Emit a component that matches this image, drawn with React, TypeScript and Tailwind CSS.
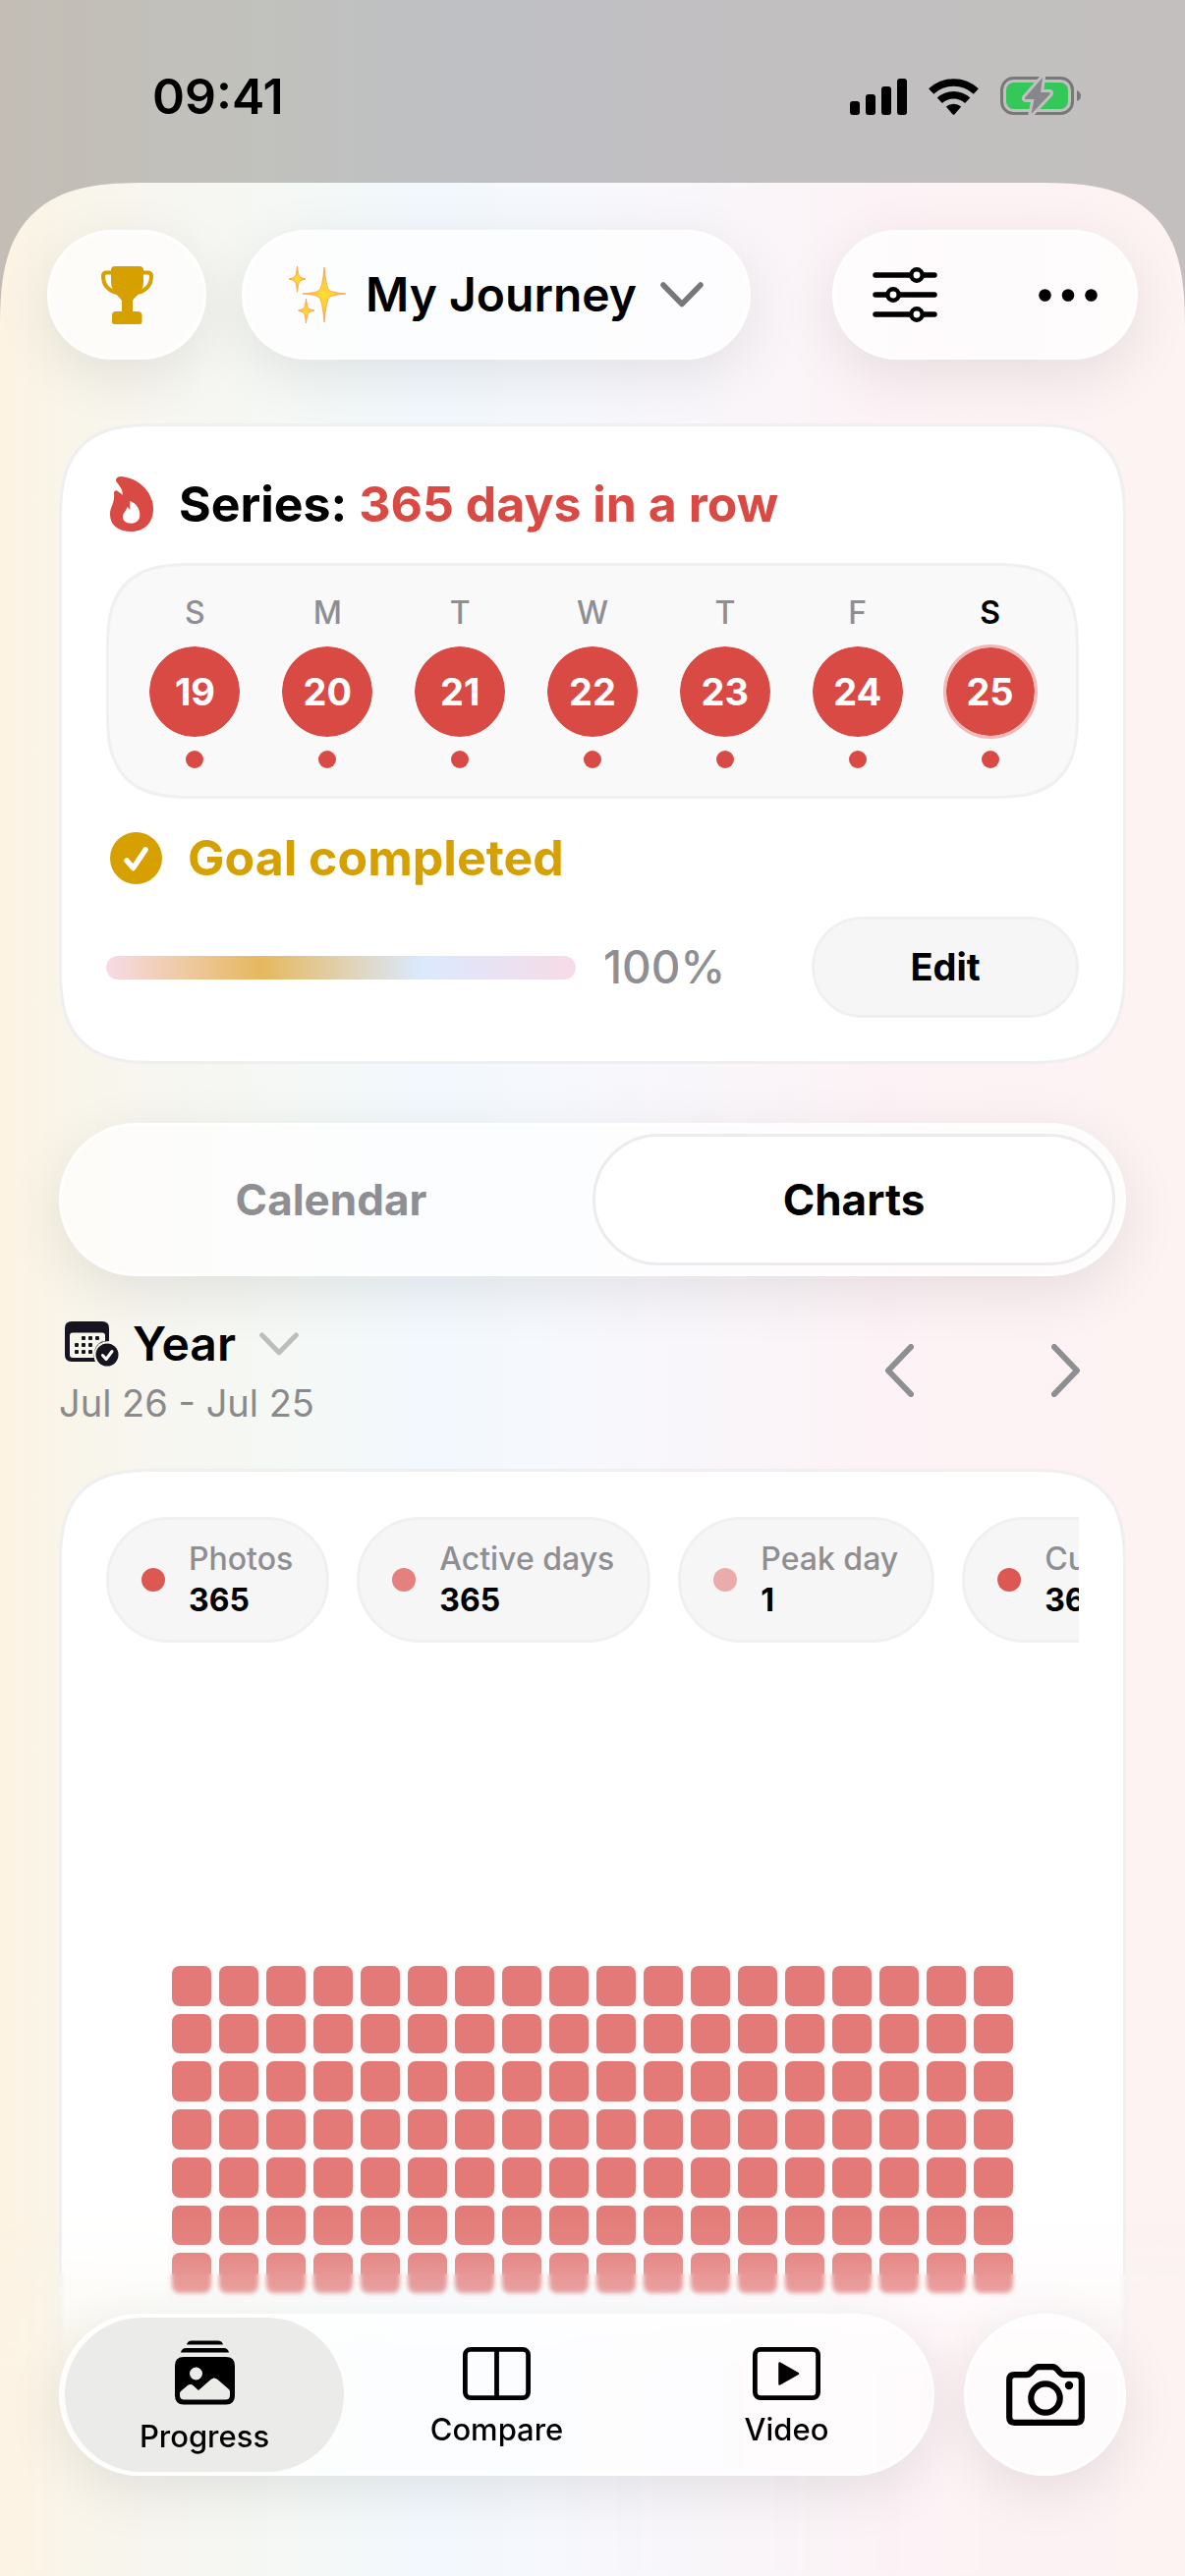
import { useState } from 'react';
import type { ReactNode } from 'react';
import { clsx } from 'clsx';

interface Day {
  label: string;
  date: number;
  today?: boolean;
}

interface Stat {
  label: string;
  value: number;
  dot: string;
}

const WEEK: Day[] = [
  { label: 'S', date: 19 },
  { label: 'M', date: 20 },
  { label: 'T', date: 21 },
  { label: 'W', date: 22 },
  { label: 'T', date: 23 },
  { label: 'F', date: 24 },
  { label: 'S', date: 25, today: true },
];

const STATS: Stat[] = [
  { label: 'Photos', value: 365, dot: 'bg-[#de5853]' },
  { label: 'Active days', value: 365, dot: 'bg-[#e4807e]' },
  { label: 'Peak day', value: 1, dot: 'bg-[#ebabaa]' },
  { label: 'Current streak', value: 365, dot: 'bg-[#de5853]' },
];

const HEATMAP_COLUMNS = 18;
const HEATMAP_ROWS = 7;

const PAGE_GRADIENT =
  'bg-[linear-gradient(90deg,#fdf3e3_0%,#f9f5ea_6%,#f7f6f1_14%,#f5f8f5_24%,#f2f8fe_36%,#f6f8fd_46%,#f9f6fa_60%,#fdf2f5_77%,#fcf3f2_100%)]';
const GLASS = 'bg-white/70 border-[3px] border-white/70 shadow-[0_16px_60px_rgba(0,0,0,0.09)]';

function SignalIcon() {
  return (
    <svg width="58" height="37" viewBox="0 0 58 37" fill="black">
      <rect x="0" y="23" width="10" height="14" rx="3" />
      <rect x="16" y="16" width="10" height="21" rx="3" />
      <rect x="32" y="8" width="10" height="29" rx="3" />
      <rect x="48" y="0" width="10" height="37" rx="3" />
    </svg>
  );
}

function WifiIcon() {
  return (
    <svg width="51" height="37" viewBox="0 0 51 37" fill="none" stroke="black" strokeWidth="7.6">
      <path d="M2.7 13A33.5 33.5 0 0 1 48.3 13" />
      <path d="M11.3 22.3A20.8 20.8 0 0 1 39.7 22.3" />
      <path d="M17.8 28.6A12.2 12.2 0 0 1 33.2 28.6L26.4 36.4Q25.5 37.2 24.6 36.4Z" fill="black" stroke="none" />
    </svg>
  );
}

function BatteryIcon() {
  return (
    <svg width="82" height="40" viewBox="0 0 82 40" fill="none">
      <rect x="1.5" y="1.5" width="72" height="36" rx="12" stroke="#78777a" strokeWidth="3" />
      <rect x="6" y="6" width="63" height="27" rx="8" fill="#34c759" />
      <path d="M78 14Q82 15.500 82 19.500Q82 23.500 78 25Z" fill="#78777a" />
      <path
        d="M43 1L25 21.500Q24.500 23 26 23H34.500L31.500 38L50.500 18Q51.500 16 50 16H41Z"
        fill="#87868a"
        stroke="#c2bfc0"
        strokeWidth="6"
        strokeLinejoin="round"
        paintOrder="stroke"
      />
    </svg>
  );
}

function TrophyIcon() {
  return (
    <svg width="53" height="59" viewBox="0 0 53 59" fill="#d6a100">
      <path d="M14 0H39Q43 0 43 4V16C43 26 36 29 32 35V46H21V35C17 29 10 26 10 16V4Q10 0 14 0Z" />
      <path d="M15 46H37Q41.500 46 41.500 50V56.500Q41.500 59 39 59H13.500Q11 59 11 56.500V50Q11 46 15 46Z" />
      <path
        d="M12 6.500H5.500Q2 6.500 2 10C2 19 7 24.500 16 27M41 6.500H47.500Q51 6.500 51 10C51 19 46 24.500 37 27"
        fill="none"
        stroke="#d6a100"
        strokeWidth="4"
      />
    </svg>
  );
}

function SparklesIcon() {
  return (
    <svg width="58" height="58" viewBox="0 0 58 58" fill="url(#sparkle)" stroke="#f7a14a" strokeWidth="0.8">
      <defs>
        <radialGradient id="sparkle">
          <stop offset="0" stopColor="#ffdd33" />
          <stop offset="0.5" stopColor="#fdcb3a" />
          <stop offset="1" stopColor="#f6a04c" />
        </radialGradient>
      </defs>
      <path d="M36 1Q38 24 42 25Q46 27 58 28Q46 29 42 31Q38 33 36 57Q34 33 30 31Q27 29 14 28Q27 27 30 25Q34 24 36 1Z" />
      <path d="M8.500 0Q9.500 9 11 10.500Q12.500 12 17 13Q12.500 14 11 15.500Q9.500 17 8.500 26Q7.500 17 6 15.500Q4.500 14 0 13Q4.500 12 6 10.500Q7.500 9 8.500 0Z" />
      <path d="M17.500 33Q18.500 42 20 43Q21.500 44 26 45Q21.500 46 20 47.500Q18.500 49 17.500 58Q16.500 49 15 47.500Q13.500 46 9.500 45Q13.500 44 15 43Q16.500 42 17.500 33Z" />
    </svg>
  );
}

function ChevronDown({ className }: { className: string }) {
  return (
    <svg
      width="44"
      height="26"
      viewBox="0 0 44 26"
      fill="none"
      stroke="currentColor"
      strokeWidth="5.500"
      strokeLinecap="round"
      strokeLinejoin="round"
      className={className}
    >
      <path d="M3 3L22 22.500L41 3" />
    </svg>
  );
}

function SlidersIcon() {
  return (
    <svg width="66" height="56" viewBox="0 0 66 56" fill="white" stroke="black" strokeWidth="5.500" strokeLinecap="round">
      <path d="M3 8H63M3 28H63M3 48H63" />
      <g strokeWidth="4.500">
        <circle cx="45" cy="8" r="5.700" />
        <circle cx="21" cy="28" r="5.700" />
        <circle cx="45" cy="48" r="5.700" />
      </g>
    </svg>
  );
}

function DotsIcon() {
  return (
    <svg width="60" height="13" viewBox="0 0 60 13" fill="black">
      <circle cx="6.500" cy="6.500" r="6.300" />
      <circle cx="30" cy="6.500" r="6.300" />
      <circle cx="53.500" cy="6.500" r="6.300" />
    </svg>
  );
}

function FlameIcon() {
  return (
    <svg width="44" height="56" viewBox="0 0 44 56">
      <path
        fill="#d94a44"
        fillRule="evenodd"
        d="M6.500 5.500C5 2 7.500 0 10.700 0C28 1 44 15 44 33C44 47 35 56 21.500 56C8 56 0 49 0 38.500C0 30 5 28 4 17C4 14 6.500 13.500 8.500 15.500L12.800 18.700C13.200 14 9.500 9 6.500 5.500ZM21.500 25.500C21 24.500 20 25 20.300 26.500V34L18.300 31.500C17.500 31 17.300 31.500 17 32.300C16 35.500 13 37.500 13 41C13 45.500 16.500 47.700 21.500 47.700C27 47.700 30.300 44.500 30.300 38.500C30.300 33 26.500 27.500 21.500 25.500Z"
      />
    </svg>
  );
}

function CheckCircleIcon() {
  return (
    <svg width="53" height="53" viewBox="0 0 53 53" fill="none">
      <circle cx="26.500" cy="26.500" r="26.500" fill="#d6a100" />
      <path
        d="M17 29L23.500 36.500L36 18"
        stroke="white"
        strokeWidth="5.500"
        strokeLinecap="round"
        strokeLinejoin="round"
      />
    </svg>
  );
}

function CalendarCheckIcon() {
  const dots = [
    [19, 17], [26, 17], [33, 17],
    [12, 24], [19, 24], [26, 24],
    [12, 31], [19, 31], [26, 31],
  ];
  return (
    <svg width="55" height="46" viewBox="0 0 55 46" fill="#15141f">
      <path
        fillRule="evenodd"
        d="M7 0H38Q45 0 45 7V20Q33 20 30 31Q29 37 31 41H7Q0 41 0 34V7Q0 0 7 0ZM8 11.500Q5 11.500 5 14.500V34Q5 37 8 37H30Q29 28 34 23Q37 20 41 20V14.500Q41 11.500 38 11.500Z"
      />
      {dots.map(([x, y]) => (
        <rect key={`${x}-${y}`} x={x - 2} y={y - 2} width="4" height="4" rx="1" />
      ))}
      <circle cx="43" cy="34" r="11.500" />
      <path d="M38.500 34.500L42 38.500L48 30.500" fill="none" stroke="white" strokeWidth="3" strokeLinecap="round" strokeLinejoin="round" />
    </svg>
  );
}

function ProgressIcon() {
  return (
    <svg width="62" height="66" viewBox="0 0 62 66" fill="black">
      <path d="M13 4.500Q14 0.500 18 0.500H45Q49 0.500 50 4.500ZM7 12.500Q8 8 12 8H51Q55 8 56 12.500Z" />
      <path
        fillRule="evenodd"
        d="M10 17H53Q62 17 62 26V56.500Q62 65.500 53 65.500H10Q1 65.500 1 56.500V26Q1 17 10 17ZM6 56V54Q6 52.500 7.500 51.500L14 46Q17 44 20 46.500L25 51L37.500 40Q41 37 44.500 40L56 50Q57 51 57 52.500V56Q57 60.500 52.500 60.500H10.500Q6 60.500 6 56ZM22.500 27.500A6.500 6.500 0 1 0 22.500 40.500A6.500 6.500 0 1 0 22.500 27.500Z"
      />
    </svg>
  );
}

function CompareIcon() {
  return (
    <svg width="69" height="54" viewBox="0 0 69 54" fill="none" stroke="black" strokeWidth="4.800">
      <rect x="2.400" y="2.400" width="64.200" height="49.200" rx="5.500" />
      <path d="M34.500 2V52" />
    </svg>
  );
}

function VideoIcon() {
  return (
    <svg width="69" height="54" viewBox="0 0 69 54" fill="none" stroke="black" strokeWidth="4.800">
      <rect x="2.400" y="2.400" width="64.200" height="49.200" rx="5.500" />
      <path d="M27.500 16.500V37.500L46 27Z" fill="black" strokeWidth="2.500" strokeLinejoin="round" />
    </svg>
  );
}

function CameraIcon() {
  return (
    <svg width="80" height="63" viewBox="0 0 80 63" fill="none" stroke="black" strokeWidth="6.200" strokeLinejoin="round">
      <path d="M8.500 11.200H20.500Q24 11.200 26.500 7.500Q29.500 3.200 33 3.200H47Q50.500 3.200 53.500 7.500Q56 11.200 59.500 11.200H71.500Q76.800 11.200 76.800 16.500V54.500Q76.800 59.800 71.500 59.800H8.500Q3.200 59.800 3.200 54.500V16.500Q3.200 11.200 8.500 11.200Z" />
      <circle cx="40" cy="35" r="14.700" />
      <circle cx="64" cy="22" r="4.200" fill="black" stroke="none" />
    </svg>
  );
}

function StatusBar() {
  return (
    <div className="flex h-[186px] items-center justify-between pt-3 pr-[106px] pb-0.5 pl-[155px]">
      <span className="text-[50px] font-semibold">09:41</span>
      <div className="flex items-center gap-[22px]">
        <SignalIcon />
        <WifiIcon />
        <BatteryIcon />
      </div>
    </div>
  );
}

function Header() {
  return (
    <header className="flex items-center px-12 pt-12">
      <button aria-label="Achievements" className={clsx('flex h-[132px] w-[162px] items-center justify-center rounded-full', GLASS)}>
        <TrophyIcon />
      </button>
      <button className={clsx('ml-9 flex h-[132px] items-center rounded-full px-[45px]', GLASS)}>
        <SparklesIcon />
        <span className="ml-5 text-[48px] font-semibold">My Journey</span>
        <ChevronDown className="ml-6 text-[#77767a]" />
      </button>
      <div className={clsx('ml-auto flex h-[132px] w-[311px] items-center justify-between rounded-full px-[38px]', GLASS)}>
        <button aria-label="Filters">
          <SlidersIcon />
        </button>
        <button aria-label="More">
          <DotsIcon />
        </button>
      </div>
    </header>
  );
}

function WeekStrip() {
  return (
    <div className="grid grid-cols-7 rounded-[90px] border-[3px] border-[#f0f0f1] bg-[#f9f9f9] px-5 pt-7 pb-7 [corner-shape:superellipse(1.5)]">
      {WEEK.map((day) => (
        <div key={day.date} className="flex flex-col items-center gap-3">
          <span className={clsx('text-[32px] leading-10', day.today ? 'font-semibold text-black' : 'font-medium text-[#8e8e93]')}>
            {day.label}
          </span>
          <span
            className={clsx(
              'flex size-24 items-center justify-center rounded-full bg-[#d94a44] bg-clip-padding text-[38px] font-bold text-white',
              day.today ? 'border-[3px] border-[#f0b9b7]' : 'border-2 border-[#f9f9f9]',
            )}
          >
            {day.date}
          </span>
          <span className="size-[18px] rounded-full bg-[#d94a44]" />
        </div>
      ))}
    </div>
  );
}

function StreakCard() {
  return (
    <section className="mt-[65px] flex flex-col gap-7 rounded-[100px] border-[3px] border-[#efeff0] bg-white px-[45px] pt-[47px] pb-11 [corner-shape:superellipse(1.5)]">
      <div className="flex h-16 items-center pl-1">
        <FlameIcon />
        <h2 className="ml-[26px] text-[50px] font-bold">
          Series: <span className="text-[#d94a44]">365 days in a row</span>
        </h2>
      </div>

      <WeekStrip />

      <div className="flex h-16 items-center pl-1">
        <CheckCircleIcon />
        <h2 className="ml-[26px] text-[50px] font-bold text-[#d6a100]">Goal completed</h2>
      </div>

      <div className="flex h-[103px] items-center">
        <div
          role="progressbar"
          aria-label="Goal"
          aria-valuenow={100}
          className="h-6 max-w-[478px] flex-1 rounded-full bg-[linear-gradient(90deg,#f7dbe6,#e6b85e_33%,#dbe9fe_67%,#f7dbe6)]"
        />
        <span className="ml-7 text-[46px] font-medium text-[#8e8e93]">100%</span>
        <button className="ml-auto h-full w-[272px] rounded-full border-[3px] border-[#f0f0f1] bg-[#f6f6f6] text-[38px] font-bold">
          Edit
        </button>
      </div>
    </section>
  );
}

const TABS = ['Calendar', 'Charts'];

function ViewTabs() {
  const [active, setActive] = useState('Charts');

  return (
    <div role="tablist" className={clsx('mt-15 grid h-[156px] grid-cols-2 rounded-full p-2', GLASS)}>
      {TABS.map((tab) => (
        <button
          key={tab}
          role="tab"
          aria-selected={tab === active}
          onClick={() => setActive(tab)}
          className={clsx(
            'rounded-full text-[44px] font-bold',
            tab === active ? 'border-[3px] border-[#ececef] bg-white text-black' : 'text-[#8e8e93]',
          )}
        >
          {tab}
        </button>
      ))}
    </div>
  );
}

function PeriodPicker() {
  return (
    <div className="flex items-center justify-between pt-[39px] pr-[46px]">
      <div className="flex flex-col gap-1.5">
        <button className="flex h-15 items-center pl-1.5">
          <CalendarCheckIcon />
          <span className="ml-3.5 text-[48px] leading-15 font-semibold">Year</span>
          <ChevronDown className="ml-6 h-6 w-10 text-[#bdbdbe]" />
        </button>
        <p className="text-[38px] leading-12 text-[#8a8a8d]">Jul 26 - Jul 25</p>
      </div>
      <div className="flex gap-[140px]">
        {['M27 3L4 27L27 51', 'M3 3L26 27L3 51'].map((d, i) => (
          <button key={d} aria-label={i === 0 ? 'Previous year' : 'Next year'}>
            <svg width="30" height="54" viewBox="0 0 30 54" fill="none" stroke="#8e8e93" strokeWidth="6" strokeLinecap="round" strokeLinejoin="round">
              <path d={d} />
            </svg>
          </button>
        ))}
      </div>
    </div>
  );
}

function ChartCard() {
  return (
    <section className="mt-[43px] flex-1 rounded-t-[100px] border-[3px] border-b-0 border-[#efeff0] bg-white px-[45px] pt-[46px] pb-[284px] [corner-shape:superellipse(1.5)]">
      <div className="flex gap-7 overflow-hidden">
        {STATS.map((stat) => (
          <div
            key={stat.label}
            className="flex h-32 shrink-0 items-center gap-6 rounded-full border-[3px] border-[#f0f0f1] bg-[#f6f6f6] pr-[34px] pl-[33px]"
          >
            <span className={clsx('size-6 rounded-full', stat.dot)} />
            <div className="text-[32px] leading-[42px]">
              <div className="font-medium text-[#8e8e93]">{stat.label}</div>
              <div className="font-bold">{stat.value}</div>
            </div>
          </div>
        ))}
      </div>

      {/* one cell per day, all of them filled */}
      <div className="mx-auto mt-[325px] grid h-[341px] w-fit grid-cols-[repeat(18,40px)] grid-rows-7 gap-2 bg-[#fcfcfc] p-1">
        {Array.from({ length: HEATMAP_COLUMNS * HEATMAP_ROWS }, (_, i) => (
          <span key={i} className="rounded-[8px] bg-[#e37a77]" />
        ))}
      </div>
    </section>
  );
}

interface NavItemProps {
  label: string;
  icon: ReactNode;
  active?: boolean;
}

function NavItem({ label, icon, active }: NavItemProps) {
  return (
    <button
      aria-current={active ? 'page' : undefined}
      className={clsx(
        'flex flex-col items-center justify-center rounded-full pt-1 text-[31px] font-medium',
        active ? 'my-px mr-2 ml-[3px] gap-3.5 bg-[#ebebea]' : 'gap-3',
      )}
    >
      {icon}
      <span className="leading-9">{label}</span>
    </button>
  );
}

function BottomNav() {
  return (
    <div className="fixed inset-x-0 bottom-0">
      {/* the page dissolves into its background under the bar */}
      <div className={clsx('absolute inset-x-0 bottom-0 h-[390px] mask-[linear-gradient(transparent_3%,rgb(0_0_0/0.08)_14%,rgb(0_0_0/0.35)_27%,black_46%)]', PAGE_GRADIENT)} />
      <div className="absolute inset-x-0 bottom-0 h-[308px] backdrop-blur-[2px]" />
      <div className="relative flex gap-[30px] px-[60px] pb-[102px]">
        <nav className={clsx('grid h-[165px] flex-1 grid-cols-3 rounded-full', GLASS)}>
          <NavItem label="Progress" icon={<ProgressIcon />} active />
          <NavItem label="Compare" icon={<CompareIcon />} />
          <NavItem label="Video" icon={<VideoIcon />} />
        </nav>
        <button aria-label="Take a photo" className={clsx('flex size-[165px] items-center justify-center rounded-full', GLASS)}>
          <CameraIcon />
        </button>
      </div>
    </div>
  );
}

export default function App() {
  return (
    <div className="flex min-h-screen flex-col bg-[linear-gradient(90deg,#c3bdb5,#c1c1bc_20%,#bec0c4_40%,#c2bfc2_60%,#c3bfbe)] font-[Inter,'Liberation_Sans',sans-serif] text-black">
      <StatusBar />
      <div className={clsx('flex flex-1 flex-col rounded-t-[150px] [corner-shape:superellipse(1.5)]', PAGE_GRADIENT)}>
        <Header />
        <main className="flex flex-1 flex-col px-[60px]">
          <StreakCard />
          <ViewTabs />
          <PeriodPicker />
          <ChartCard />
        </main>
      </div>
      <BottomNav />
    </div>
  );
}
